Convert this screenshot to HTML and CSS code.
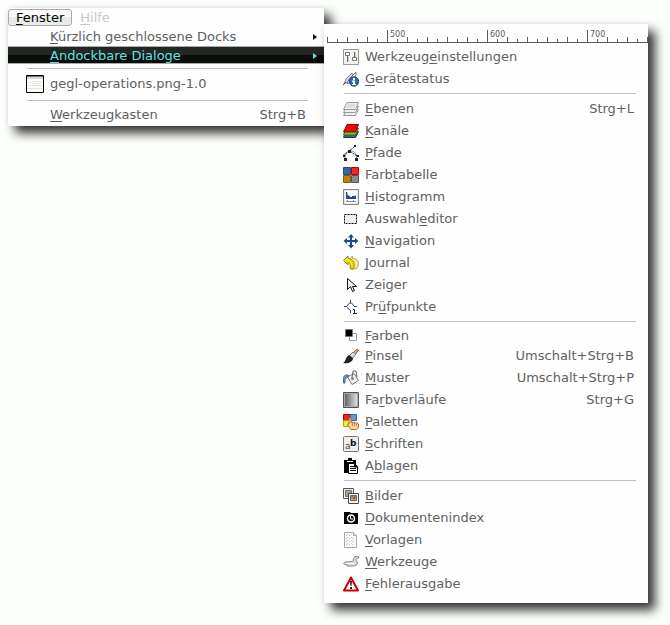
FILE: index.html
```html
<!DOCTYPE html>
<html lang="de">
<head>
<meta charset="utf-8">
<title>Fenster</title>
<link rel="stylesheet" href="styles.css">
</head>
<body>
<main class="desk">
<section class="panel window-menu">
  <nav class="menubar">
    <button class="tab active"><u>F</u>enster</button>
    <button class="tab" disabled><u>H</u>ilfe</button>
  </nav>
  <div class="menu" role="menu">
    <button class="item slim" role="menuitem"><span class="icon"></span><span><u>K</u>ürzlich geschlossene Docks</span><svg class="arrow" viewBox="0 0 4 6"><path d="M0 0L4 3L0 6z"/></svg></button>
    <button class="item slim selected" role="menuitem"><span class="icon"></span><span><u>A</u>ndockbare Dialoge</span><svg class="arrow" viewBox="0 0 4 6"><path d="M0 0L4 3L0 6z"/></svg></button>
    <hr>
    <button class="item image" role="menuitem"><svg class="icon" viewBox="0 0 18 18"><path fill="#fdfefc" stroke="#000" d="M.5.5h17v17H.5z"/><path fill="#d5d8d4" d="M1 2h16v2H1z"/><path fill="#777" d="M1 1h16v1H1z"/><path stroke="#d7ebd9" d="M6 6.500h10M6 10.500h10"/><path stroke="#e4e6e4" d="M2 7.500h3M2 10.500h3M2 13.500h14M6 8.500h9"/></svg><span>gegl-operations.png-1.0</span></button>
    <hr>
    <button class="item" role="menuitem"><span class="icon"></span><span><u>W</u>erkzeugkasten</span><kbd>Strg+B</kbd></button>
  </div>
</section>

<section class="panel dialogs-menu">
  <svg class="ruler" width="100%" height="19">
    <defs>
      <pattern id="ticks" x="3" width="20" height="19" patternUnits="userSpaceOnUse"><path d="M0 13h1v6H0zM10 15h1v4h-1z"/></pattern>
    </defs>
    <rect x="3" width="100%" height="19" fill="url(#ticks)"/>
    <path d="M63 6h1v13h-1zM163 6h1v13h-1zM263 6h1v13h-1z"/>
    <rect x="3" y="18" width="100%" height="1"/>
    <text x="66" y="13">500</text><text x="166" y="13">600</text><text x="266" y="13">700</text>
  </svg>
  <div class="menu" role="menu">
    <button class="item" role="menuitem"><svg class="icon" viewBox="0 0 16 16"><path fill="#f4f4f3" stroke="#969694" d="M.5.5h15v15H.5z"/><path fill="#fff" stroke="#777" d="M2.500 3.500h4v3h-4zM9.500 8.500h4v3h-4z"/><path stroke="#666" d="M4.500 7v6M11.500 3v5"/><path stroke="#ccc" d="M5.500 8v5M12.500 3v5"/></svg><span>Werkzeug<u>e</u>instellungen</span></button>
    <button class="item" role="menuitem"><svg class="icon" viewBox="0 0 16 16"><path fill="#ddd" stroke="#888" d="M1 13L3 8L9 2l1 2-5 7z"/><path fill="#eee" stroke="#777" d="M4 13L6 8l7-7v3L8 11z"/><path stroke="#555" fill="none" d="M0 14l3-3"/><circle cx="11" cy="10.500" r="4.700" fill="#3465a4" stroke="#204a87"/><path fill="#fff" d="M10 7h2v2h-2zM9 9.500h3V13h1v1H9v-1h1v-2H9z"/></svg><span><u>G</u>erätestatus</span></button>
    <hr>
    <button class="item" role="menuitem"><svg class="icon" viewBox="0 0 16 16"><g fill="#eee" stroke="#999"><path d="M3.500 8.500h12l-3 6H.5z"/><path d="M3.500 5.500h12l-3 6H.5z"/><path d="M4 1.500h11.500l-3 7H.5z"/></g><path fill="#ddd" d="M5 3h8l-2 4H3z"/></svg><span><u>E</u>benen</span><kbd>Strg+L</kbd></button>
    <button class="item" role="menuitem"><svg class="icon" viewBox="0 0 16 16"><path fill="#3465a4" stroke="#173665" d="M3 8.500h12.500l-3 6H.5z"/><path fill="#73d216" stroke="#2b7008" d="M3 5.500h12.500l-3 6.500H.5z"/><path fill="#e50c0c" stroke="#970000" d="M4 1.500h11.500l-3 7.500H.5z"/></svg><span><u>K</u>anäle</span></button>
    <button class="item" role="menuitem"><svg class="icon" viewBox="0 0 16 16"><path fill="none" stroke="#5c83b5" d="M2 14C2 8 5 5 8 6c4 0 6 4 5.500 9"/><path stroke="#222" stroke-dasharray="2 1" d="M0 10.500L12 1.500M7 6.500l8 5"/><path fill="#222" d="M11 0h2v2h-2zM5 5h3v3H5zM0 10h2v2H0zM1 13h3v3H1zM14 10h2v2h-2zM12 13h3v3h-3z"/></svg><span><u>P</u>fade</span></button>
    <button class="item" role="menuitem"><svg class="icon" viewBox="0 0 16 16"><path fill="#3465a4" stroke="#204a87" d="M.5.5h7v7h-7z"/><path fill="#ef2929" stroke="#b00" d="M8.500.5h7v7h-7z"/><path fill="#c17d11" stroke="#8f5902" d="M.5 8.500h7v7h-7z"/><path fill="#888a85" stroke="#555753" d="M8.500 8.500h7v7h-7z"/></svg><span>Farb<u>t</u>abelle</span></button>
    <button class="item" role="menuitem"><svg class="icon" viewBox="0 0 16 16"><path fill="#e4e7ea" stroke="#888a85" d="M.5.5h15v15H.5z"/><path fill="#fff" d="M2 2h12v12H2z"/><path fill="#204a87" d="M3 3h1l1 4 1-1 1 2h2V7h2v1l1-2 1 1v3H3z"/><path stroke="#888" d="M3 12.500h10M4.500 11v2M10.500 11v2"/></svg><span><u>H</u>istogramm</span></button>
    <button class="item" role="menuitem"><svg class="icon" viewBox="0 0 16 16"><path fill="#eee" stroke="#000" stroke-dasharray="2 1" d="M1.500 3.500h12v9h-12z"/></svg><span>Auswahl<u>e</u>ditor</span></button>
    <button class="item" role="menuitem"><svg class="icon" viewBox="0 0 16 16"><path fill="#204a87" d="M8 1l3 3.500H9V7h3V5l3.500 3L12 11V9H9v3h2l-3 3.500L5 12h2V9H4v2L.5 8L4 5v2h3V4.500H5z"/></svg><span><u>N</u>avigation</span></button>
    <button class="item" role="menuitem"><svg class="icon" viewBox="0 0 16 16"><path fill="#f4ed91" stroke="#b9a63a" d="M5 5.500L9.500 1v2.500c6 0 8 6 3.500 10.500-2 0-3-1-3-1 2-3 0-5-1-5v2z"/><path fill="#edd400" stroke="#a38a10" d="M.5 5.500L5 1v2.500c5 0 8 6 5 11L7 13.500c1-3 0-5.500-2-5.500v2z"/><path fill="none" stroke="#fbf29a" d="M2 5.500L4 3.500V5c3 0 5 3 5 6"/></svg><span><u>J</u>ournal</span></button>
    <button class="item" role="menuitem"><svg class="icon" viewBox="0 0 16 16"><path fill="#eee" stroke="#111" d="M4.500 1.500v11l3-3 2 5 2-1-2-4h4z"/></svg><span>Zeiger</span></button>
    <button class="item" role="menuitem"><svg class="icon" viewBox="0 0 16 16"><path fill="none" stroke="#28466e" d="M7.500 1v3M1 7.500h3M11 7.500h3M7.500 11v3M3.500 7.500l3-3.500h2l3 3.500M4 8.500L7 11"/><path fill="none" stroke="#15315b" d="M10 10.500h1.500V15M10 14.500h4"/></svg><span>Pr<u>ü</u>fpunkte</span></button>
    <hr>
    <button class="item colors" role="menuitem"><svg class="icon" viewBox="0 0 16 16"><path fill="#fff" stroke="#999" d="M6.500 5.500h7v7h-7z"/><path fill="#000" stroke="#777" d="M2.500 1.500h7v7h-7z"/></svg><span><u>F</u>arben</span></button>
    <button class="item" role="menuitem"><svg class="icon" viewBox="0 0 16 16"><path fill="#dca66a" stroke="#8b6b48" d="M10 5l4-4 1.500 1L12 7z"/><path fill="#ddd" stroke="#777" d="M6 8l4-4 3 2-4 5z"/><path fill="#242424" d="M6 7l4 3c0 4-5 6-10 5 3-1 2-6 6-8z"/></svg><span><u>P</u>insel</span><kbd>Umschalt+Strg+B</kbd></button>
    <button class="item" role="menuitem"><svg class="icon" viewBox="0 0 16 16"><path fill="#f2f2f1" stroke="#777" d="M4.500 7L11 3.500l4.500 7-6.500 4z"/><path fill="none" stroke="#666" d="M9 8l1-7h3l1 6"/><circle cx="9.500" cy="8.500" r="1.500" fill="#888"/><path fill="#7794b9" stroke="#48678e" d="M6 5.500C2 4 0 6 .5 10v3h1.500V9L5 7z"/></svg><span><u>M</u>uster</span><kbd>Umschalt+Strg+P</kbd></button>
    <button class="item" role="menuitem"><svg class="icon" viewBox="0 0 16 16"><defs><linearGradient id="gray"><stop stop-color="#555"/><stop offset="1" stop-color="#eee"/></linearGradient></defs><path fill="url(#gray)" stroke="#555" d="M.5.5h15v15H.5z"/><path fill="none" stroke="#aaa" d="M1.500 1.500h13v13h-13z"/></svg><span>Fa<u>r</u>bverläufe</span><kbd>Strg+G</kbd></button>
    <button class="item" role="menuitem"><svg class="icon" viewBox="0 0 16 16"><path fill="#e22" stroke="#a00" d="M.5.5h7v6h-7z"/><path fill="#6d95d0" stroke="#3465a4" d="M7.500.5h6v6h-6z"/><path fill="#fce62e" stroke="#c4a000" d="M.5 6.500h7v6h-7z"/><path fill="#ffd6a0" stroke="#bd701c" d="M6 4.500q1-1 2 0V9l1-1 1 .5 1-.5 1 1h2l1.500 1v3l-2 2.500H8L4.500 11q0-2 1.500-1z"/><path stroke="#c98442" d="M9.500 9v3M11.500 9v3M13.500 10v2"/></svg><span><u>P</u>aletten</span></button>
    <button class="item" role="menuitem"><svg class="icon" viewBox="0 0 16 16"><rect x=".5" y=".5" width="15" height="15" rx="1" fill="#eee" stroke="#777"/><text class="glyph" x="2" y="13">a</text><text class="glyph strong" x="7" y="10">b</text></svg><span><u>S</u>chriften</span></button>
    <button class="item" role="menuitem"><svg class="icon" viewBox="0 0 16 16"><path d="M1 2h4V0h4v2h4v4H5v9H1z"/><path stroke="#fff" d="M4 3.500h6"/><path fill="#fff" stroke="#000" d="M5.500 5.500h6l3 3v7h-9z"/><path stroke="#000" d="M7 8.500h4M7 10.500h6M7 12.500h6M11.500 6v3h3"/></svg><span>A<u>b</u>lagen</span></button>
    <hr>
    <button class="item" role="menuitem"><svg class="icon" viewBox="0 0 16 16"><path fill="#eee" stroke="#555" d="M.5.5h10v10H.5z"/><path fill="#99a88b" stroke="#777" d="M2.500 2.500h6v6h-6z"/><path fill="#f5f5f3" stroke="#444" d="M5.500 5.500h10v10h-10z"/><path fill="#778c9b" stroke="#666" d="M7.500 7.500h6v5h-6z"/><path fill="#d0a13b" d="M8 10h5v2H8z"/><path fill="#a34b39" d="M10 9h2v2h-2z"/></svg><span><u>B</u>ilder</span></button>
    <button class="item" role="menuitem"><svg class="icon" viewBox="0 0 16 16"><path d="M1 2h6l1 1h7v11H1z"/><circle cx="8" cy="8.500" r="3.500" fill="none" stroke="#fff" stroke-width="1.500"/><path fill="none" stroke="#fff" d="M7.500 6v3H10"/></svg><span><u>D</u>okumentenindex</span></button>
    <button class="item" role="menuitem"><svg class="icon" viewBox="0 0 16 16"><path fill="#f7f7f6" stroke="#aaa" d="M1.500.5h9l3 3v12h-12z"/><path fill="#ddd" stroke="#aaa" d="M10.500.5v3h3"/><path stroke="#c5c5c5" stroke-dasharray="1 2" d="M3 3.500h6M3 6.500h9M3 9.500h9M3 12.500h9M4.500 2v12M8.500 2v12"/></svg><span><u>V</u>orlagen</span></button>
    <button class="item" role="menuitem"><svg class="icon" viewBox="0 0 16 16"><path fill="#d9dad7" stroke="#888a85" d="M.5 9.500C2 7 6 8 9.500 7.500c1 0 .5-3 1.500-4s3-1.500 4.500-1v1.500L13 5c-1 1 1.500 2 1.500 4s-2 3-5 3H4v-1.500c-2 0-3 0-3.500-1z"/><path stroke="#fff" d="M3 9.500h8"/></svg><span><u>W</u>erkzeuge</span></button>
    <button class="item" role="menuitem"><svg class="icon" viewBox="0 0 16 16"><path fill="#fff" stroke="#c00" stroke-width="2" stroke-linejoin="round" d="M8 1.500L15 14.500H1z"/><path fill="#222" d="M7 5h2l-.5 5h-1zM7 11h2v2H7z"/></svg><span><u>F</u>ehlerausgabe</span></button>
  </div>
</section>
</main>
</body>
</html>
```
FILE: styles.css
```css
* { box-sizing: border-box; }

body {
  margin: 0;
  background: #fdfffc;
  color: #606060;
  font: 13px/18px "DejaVu Sans", sans-serif;
}

.desk {
  display: grid;
  grid-template-columns: 316fr 324fr;
  align-items: start;
  padding: 8px 22px 22px 8px;
}

.panel {
  background: #fefefe;
  box-shadow: 7px 7px 10px rgba(0, 0, 0, 0.8), 0 0 6px rgba(0, 0, 0, 0.06);
}

.dialogs-menu {
  position: relative;
  margin-top: 16px;
  padding-bottom: 8px;
}

.menubar {
  display: flex;
  padding: 1px 0 2px;
}

button {
  border: 0;
  background: none;
  color: inherit;
  font: inherit;
}

u {
  text-underline-offset: 2px;
  text-decoration-thickness: 1px;
  text-decoration-skip-ink: none;
}

.tab {
  padding: 0 7px;
  border: 1px solid transparent;
  line-height: 15px;
}

.tab.active {
  border-color: #aaa;
  border-radius: 3px;
  background: linear-gradient(#fafafa 50%, #e9ebe9 50%);
  color: #000;
}

.tab:disabled { color: #c8c8c8; }

.menu {
  display: flex;
  flex-direction: column;
}

.item {
  display: flex;
  align-items: center;
  gap: 6px;
  height: 22px;
  padding: 0 14px 0 19px;
  text-align: left;
  white-space: nowrap;
}

.icon {
  flex: none;
  width: 16px;
  height: 16px;
}

.window-menu .item { padding: 0 18px; }
.window-menu .icon { width: 18px; height: 18px; }

.window-menu .item.slim {
  height: 18px;
  padding-right: 7px;
}

.window-menu .item.selected {
  padding-top: 2px;
  border-top: 1px solid #aaa;
  border-bottom: 1px solid #aaa;
  background: linear-gradient(#242624 50%, #0b0d0b 50%);
  color: #62e3e3;
}

.window-menu .item.image { height: 24px; }
.item.colors { height: 19px; }

.arrow {
  width: 4px;
  height: 6px;
  margin-left: auto;
  fill: #111;
}

.selected .arrow { fill: #62e3e3; }

kbd {
  margin-left: auto;
  font: inherit;
}

hr {
  height: 1px;
  margin: 3px 12px 4px 20px;
  border: 0;
  background: #c0c0c0;
}

.window-menu hr { margin: 4px 16px 3px 19px; }

.ruler {
  display: block;
  margin-bottom: 3px;
  fill: #5a5a5a;
}

.ruler text { font-size: 8px; }

.glyph {
  font-size: 9px;
  fill: #444;
}

.strong {
  font-weight: bold;
  fill: #111;
}
```
